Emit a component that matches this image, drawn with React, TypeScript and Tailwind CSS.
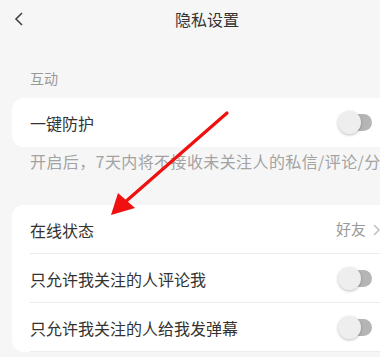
import React from "react";

const Toggle = () => (
  <div className="relative w-[34px] h-[24px] flex items-center">
    <div className="absolute right-0 w-[30px] h-[17px] rounded-full bg-[#b5b5b5]" />
    <div className="absolute left-0 w-[23px] h-[23px] rounded-full bg-[#eeeeee] shadow-[0_1px_3px_rgba(0,0,0,0.25)]" />
  </div>
);

const Row = ({
  label,
  right,
  divider = true,
}: {
  label: string;
  right: React.ReactNode;
  divider?: boolean;
}) => (
  <div className="relative h-[49px] flex items-center justify-between pl-[18px]">
    <span className="text-[16px] text-[#333]">{label}</span>
    {right}
    {divider && (
      <div className="absolute left-[18px] right-0 bottom-0 h-px bg-[#ececec]" />
    )}
  </div>
);

export default function App() {
  return (
    <div
      className="relative w-[380px] h-[357px] overflow-hidden bg-[#f6f6f6]"
      style={{ fontFamily: '"Noto Sans CJK SC", "Noto Sans", sans-serif' }}
    >
      <div className="w-[414px]">
        {/* header */}
        <div className="relative h-[38px] flex items-center justify-center">
          <svg
            className="absolute left-[13px] top-[11px]"
            width="12"
            height="16"
            viewBox="0 0 12 16"
          >
            <path d="M9 2 L3 8 L9 14" fill="none" stroke="#444" strokeWidth="1.6" />
          </svg>
          <span className="text-[16px] text-[#333]">隐私设置</span>
        </div>

        <div className="pl-[30px] pt-[30px] h-[60px] text-[14px] text-[#999] leading-[20px]">
          互动
        </div>

        <div className="mx-[12px] bg-white rounded-[12px]">
          <Row
            label="一键防护"
            divider={false}
            right={
              <div className="pr-[30px]">
                <Toggle />
              </div>
            }
          />
        </div>

        <div className="h-[58px] pl-[30px] pt-[4px] text-[16px] leading-[20px] tracking-[0.4px] text-[#a3a3a3] whitespace-nowrap">
          开启后，7天内将不接收未关注人的私信/评论/分享消息
        </div>

        <div className="mx-[12px] bg-white rounded-[12px]">
          <Row
            label="在线状态"
            right={
              <div className="flex items-center gap-[6px] pr-[22px] text-[15px] text-[#999]">
                <span>好友</span>
                <svg width="8" height="12" viewBox="0 0 8 12">
                  <path d="M2 1 L7 6 L2 11" fill="none" stroke="#bbb" strokeWidth="1.4" />
                </svg>
              </div>
            }
          />
          <Row
            label="只允许我关注的人评论我"
            right={
              <div className="pr-[30px]">
                <Toggle />
              </div>
            }
          />
          <Row
            label="只允许我关注的人给我发弹幕"
            right={
              <div className="pr-[30px]">
                <Toggle />
              </div>
            }
          />
        </div>
      </div>

      {/* red annotation arrow */}
      <svg className="absolute left-0 top-0" width="380" height="357">
        <line x1="227" y1="113" x2="124" y2="203" stroke="#f01010" strokeWidth="3.2" strokeLinecap="round" />
        <polygon points="111,215 118,193 135,208" fill="#f01010" />
      </svg>
    </div>
  );
}
